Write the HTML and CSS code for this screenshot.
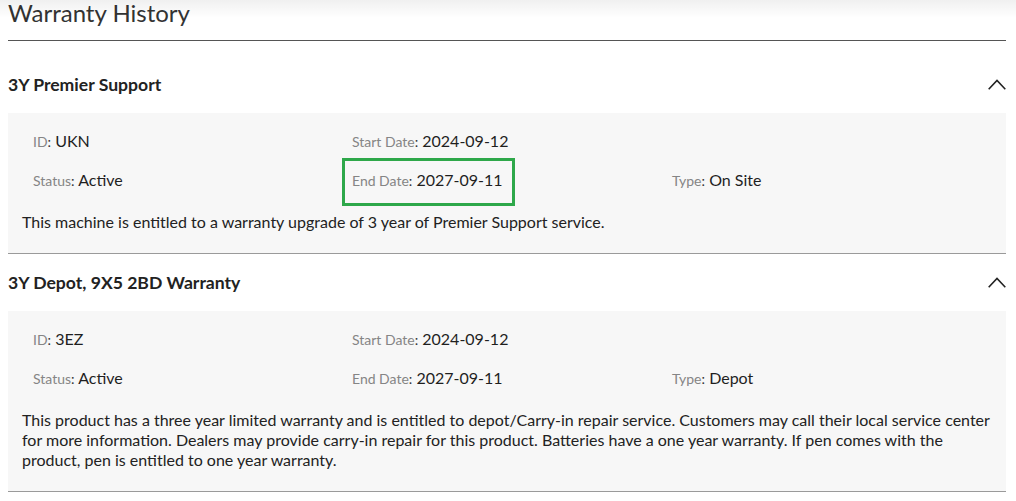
FILE: index.html
```html
<!DOCTYPE html>
<html lang="en">
<head>
<meta charset="utf-8">
<title>Warranty History</title>
<link rel="stylesheet" href="styles.css">
</head>
<body>
<div class="page">
  <h1 class="page-title">Warranty History</h1>
  <div class="rule"></div>

  <section class="warranty">
    <div class="warranty-head">
      <h2 class="warranty-name">3Y Premier Support</h2>
      <svg class="chevron" width="18" height="11" viewBox="0 0 18 11"><path d="M0.7 10.3 L9 1.5 L17.3 10.3" fill="none" stroke="#222" stroke-width="1.6"/></svg>
    </div>
    <div class="warranty-body">
      <div class="fields">
        <div class="field"><span class="label">ID</span><span class="colon">:</span> <span class="value">UKN</span></div>
        <div class="field"><span class="label">Start Date</span><span class="colon">:</span> <span class="value">2024-09-12</span></div>
        <div class="field"></div>
        <div class="field"><span class="label">Status</span><span class="colon">:</span> <span class="value">Active</span></div>
        <div class="field highlighted"><span class="label">End Date</span><span class="colon">:</span> <span class="value">2027-09-11</span></div>
        <div class="field"><span class="label">Type</span><span class="colon">:</span> <span class="value">On Site</span></div>
      </div>
      <p class="desc">This machine is entitled to a warranty upgrade of 3 year of Premier Support service.</p>
    </div>
  </section>

  <section class="warranty">
    <div class="warranty-head">
      <h2 class="warranty-name">3Y Depot, 9X5 2BD Warranty</h2>
      <svg class="chevron" width="18" height="11" viewBox="0 0 18 11"><path d="M0.7 10.3 L9 1.5 L17.3 10.3" fill="none" stroke="#222" stroke-width="1.6"/></svg>
    </div>
    <div class="warranty-body">
      <div class="fields">
        <div class="field"><span class="label">ID</span><span class="colon">:</span> <span class="value">3EZ</span></div>
        <div class="field"><span class="label">Start Date</span><span class="colon">:</span> <span class="value">2024-09-12</span></div>
        <div class="field"></div>
        <div class="field"><span class="label">Status</span><span class="colon">:</span> <span class="value">Active</span></div>
        <div class="field"><span class="label">End Date</span><span class="colon">:</span> <span class="value">2027-09-11</span></div>
        <div class="field"><span class="label">Type</span><span class="colon">:</span> <span class="value">Depot</span></div>
      </div>
      <p class="desc">This product has a three year limited warranty and is entitled to depot/Carry-in repair service. Customers may call their local service center for more information. Dealers may provide carry-in repair for this product. Batteries have a one year warranty. If pen comes with the product, pen is entitled to one year warranty.</p>
    </div>
  </section>
</div>
<div class="top-shade"></div>
</body>
</html>
```

FILE: styles.css
```css
* { box-sizing: border-box; }

html, body {
  margin: 0;
  padding: 0;
  background: #ffffff;
}

body {
  font-family: Lato, "Open Sans", "Liberation Sans", sans-serif;
  color: #222222;
  width: 1016px;
  height: 501px;
  overflow: hidden;
  position: relative;
}

.page {
  padding: 0 10px 0 8px;
}

.page-title {
  margin: 0;
  font-size: 24px;
  font-weight: 400;
  line-height: 28px;
  color: #333333;
  margin-top: -1px;
}

.rule {
  height: 1px;
  background: #555555;
  margin-top: 13px;
  margin-bottom: 15px;
}

.warranty-head {
  display: flex;
  align-items: center;
  justify-content: space-between;
  padding: 17px 0 16px;
}

.warranty-name {
  margin: 0;
  font-size: 17.6px;
  font-weight: 700;
  line-height: 24px;
  color: #222222;
}

.chevron {
  display: block;
  margin-top: -2px;
}

.warranty-body {
  background: #f7f7f7;
  border-bottom: 1px solid #9a9a9a;
  padding: 16px 12px 21px 14px;
}

.fields {
  display: grid;
  grid-template-columns: 319px 320px 1fr;
  row-gap: 15px;
  padding-left: 11px;
}

.field {
  position: relative;
  font-size: 16px;
  line-height: 24px;
  height: 24px;
  white-space: nowrap;
}

.label {
  font-size: 14px;
  color: #858585;
}

.colon {
  font-size: 14px;
  color: #333333;
}

.value {
  color: #1f1f1f;
}

.highlighted::after {
  content: "";
  position: absolute;
  left: -10px;
  top: -10px;
  width: 167px;
  height: 42px;
  border: 3px solid #2ea84a;
}

.desc {
  margin: 20px 0 0;
  font-size: 16px;
  line-height: 20px;
  color: #222222;
}

.top-shade {
  position: absolute;
  left: 0;
  top: 0;
  width: 100%;
  height: 18px;
  background: linear-gradient(to bottom, rgba(0,0,0,0.06), rgba(0,0,0,0));
  pointer-events: none;
}
```
